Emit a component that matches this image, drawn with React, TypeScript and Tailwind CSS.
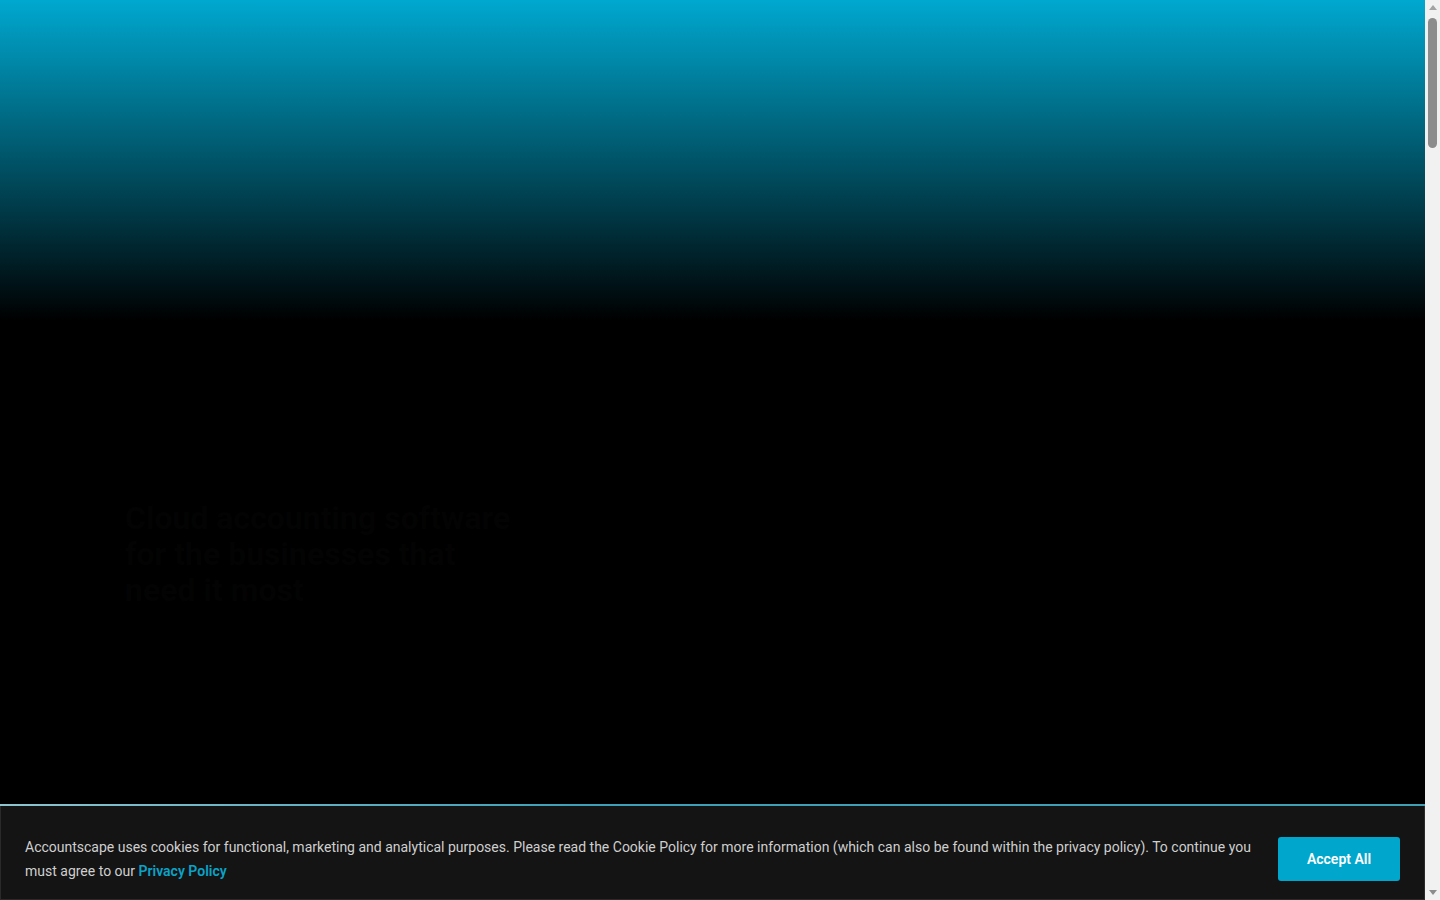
export default function App() {
  return (
    <div className="min-h-screen bg-black pr-[15px] font-['Roboto','Liberation_Sans',sans-serif]">
      {/* hero: cyan fading into black */}
      <section className="h-[320px] bg-[linear-gradient(to_bottom,#00a8d0,#000)]" />
      <section className="px-[125px] pt-[180px]">
        <h1 className="max-w-[400px] text-[32px] font-bold leading-[36px] text-[#030303]">
          Cloud accounting software for the businesses that need it most
        </h1>
      </section>
      <div className="h-[5200px]" />

      {/* cookie consent bar */}
      <div className="fixed bottom-0 left-0 right-[15px] z-50">
        <div className="h-[2px] bg-[linear-gradient(to_right,#8ec4d0,#3ea0b8_40%,#3f9fb5)]" />
        <div className="flex items-start gap-[27px] border-x border-b border-[#2a2a2a] bg-[#141414] px-[24px] pb-[16px] pt-[29px]">
          <p className="flex-1 text-[14px] leading-[24px] text-[#cfcfcf]">
            Accountscape uses cookies for functional, marketing and analytical purposes. Please read the Cookie Policy for more information (which can also be found within the privacy policy). To continue you must agree to our{" "}
            <a href="#" className="font-semibold text-[#0aa3c8]">
              Privacy Policy
            </a>
          </p>
          <button className="mt-[2px] h-[44px] w-[122px] shrink-0 rounded-[3px] bg-[#00a6cc] text-[14px] font-semibold text-white">
            Accept All
          </button>
        </div>
      </div>

      {/* window scrollbar */}
      <div className="fixed right-0 top-0 z-50 flex h-full w-[15px] flex-col items-center bg-[#f1f1f1]">
        <div className="flex h-[15px] items-center justify-center">
          <div className="h-0 w-0 border-x-[4px] border-b-[5px] border-x-transparent border-b-[#a3a3a3]" />
        </div>
        <div className="mt-[3px] h-[130px] w-[9px] rounded-full bg-[#8c8c8c]" />
        <div className="flex-1" />
        <div className="flex h-[15px] items-center justify-center">
          <div className="h-0 w-0 border-x-[4px] border-t-[5px] border-x-transparent border-t-[#8c8c8c]" />
        </div>
      </div>
    </div>
  );
}
